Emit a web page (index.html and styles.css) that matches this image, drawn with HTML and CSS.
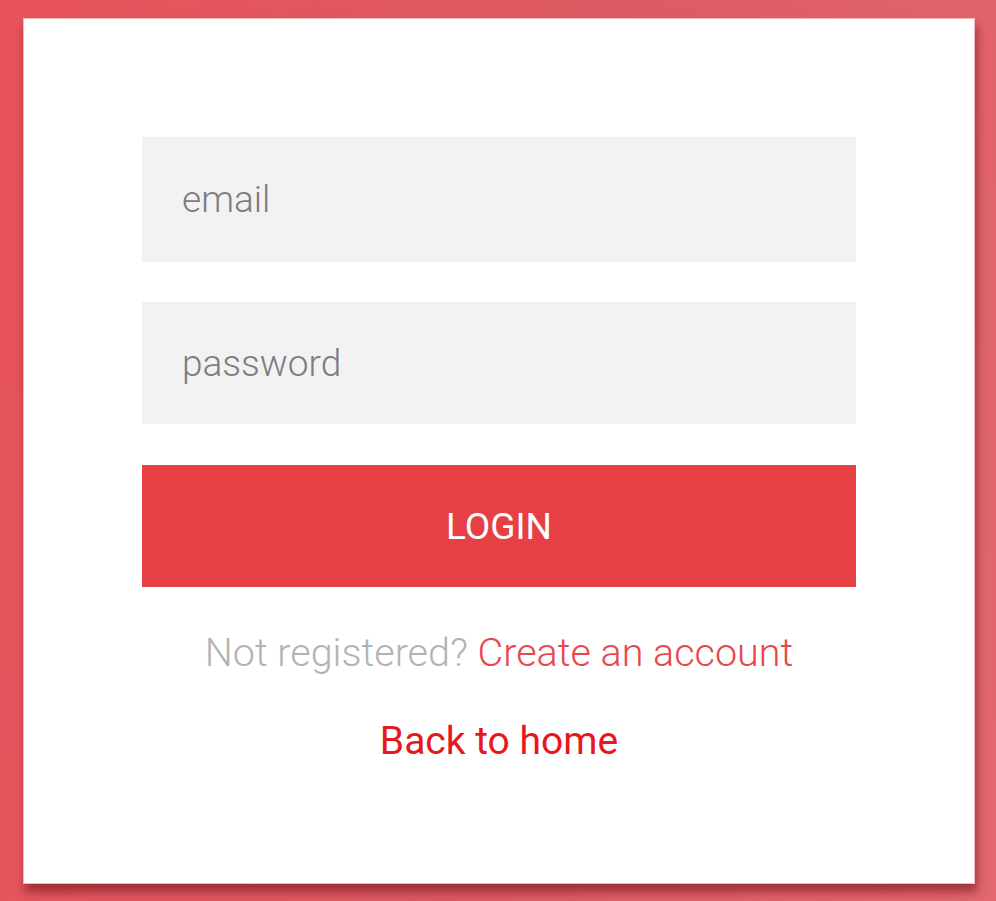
FILE: index.html
```html
<!DOCTYPE html>
<html>
<head>
<meta charset="utf-8">
<link rel="stylesheet" href="styles.css">
</head>
<body>
<div class="page">
  <div class="card">
    <form class="form">
      <input class="field field-email" type="text" placeholder="email">
      <input class="field field-password" type="password" placeholder="password">
      <button class="login" type="button">LOGIN</button>
      <p class="message">Not registered? <a class="create" href="#">Create an account</a></p>
      <a class="home" href="#">Back to home</a>
    </form>
  </div>
</div>
</body>
</html>
```
FILE: styles.css
```css
html, body {
  margin: 0;
  padding: 0;
  height: 100%;
}
body {
  background: linear-gradient(100deg, #e8535a 0%, #dc5b64 55%, #e2676f 100%);
  font-family: Roboto, "Liberation Sans", sans-serif;
}
.page {
  padding: 18px 0 0 23px;
}
.card {
  width: 952px;
  height: 866px;
  box-sizing: border-box;
  background: #fff;
  border: 1px solid #f4b9bb;
  box-shadow: 2px 8px 9px rgba(115, 20, 25, 0.6);
  padding: 118px 118px 0;
}
.form {
  display: flex;
  flex-direction: column;
  align-items: center;
  margin: 0;
}
.field {
  width: 714px;
  box-sizing: border-box;
  border: 0;
  outline: 0;
  background: #f2f2f2;
  font-family: Roboto, "Liberation Sans", sans-serif;
  font-weight: 300;
  font-size: 37px;
  color: #7a7a7a;
  padding: 0 40px;
  margin: 0;
}
.field::placeholder {
  color: #7b7d82;
}
.field-email {
  height: 125px;
}
.field-password {
  height: 122px;
  margin-top: 40px;
}
.login {
  width: 714px;
  height: 122px;
  margin-top: 41px;
  border: 0;
  background: #e64044;
  color: #fff;
  font-family: Roboto, "Liberation Sans", sans-serif;
  font-size: 37px;
  font-weight: 400;
  padding: 0;
}
.message {
  margin: 42px 0 0;
  font-size: 39.5px;
  font-weight: 300;
  color: #b3b3b3;
  line-height: 1.2;
}
.create {
  color: #e8474d;
  text-decoration: none;
}
.home {
  margin-top: 42px;
  font-size: 39px;
  font-weight: 400;
  color: #e8161e;
  text-decoration: none;
  line-height: 1.2;
}
```
